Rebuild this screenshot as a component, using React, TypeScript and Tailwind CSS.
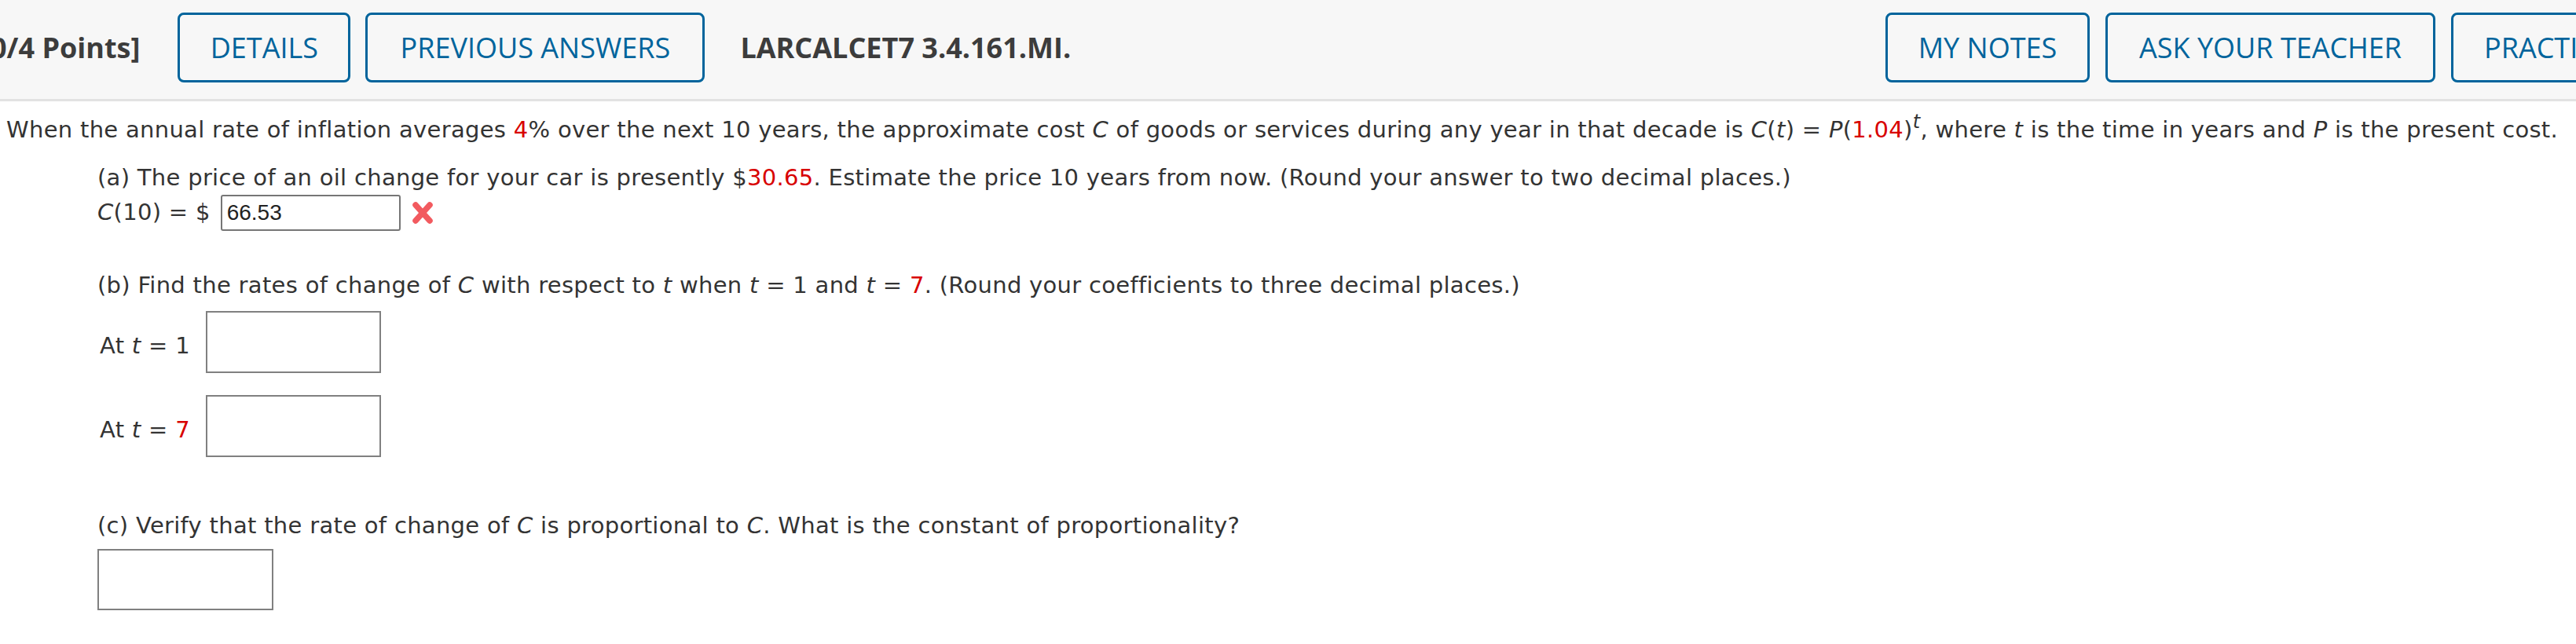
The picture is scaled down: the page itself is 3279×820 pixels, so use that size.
import React from "react";

function RedX() {
  return (
    <svg width="30" height="30" viewBox="0 0 30 30" className="ml-[13px] shrink-0">
      <path d="M6 5 L24 25 M24 5 L6 25" stroke="#f25a5f" strokeWidth="7.5" strokeLinecap="round" fill="none" />
    </svg>
  );
}

const Btn = ({ label, w }: { label: string; w: string }) => (
  <div
    className={`flex h-[89px] shrink-0 items-center justify-center whitespace-nowrap rounded-[8px] border-[3px] border-[#00649c] text-[36px] text-[#00649c] ${w}`}
  >
    {label}
  </div>
);

export default function App() {
  return (
    <div className="h-[820px] w-[3279px] overflow-hidden bg-white">
      <header className="flex h-[129px] items-start overflow-hidden border-b-[3px] border-[#e2e2e2] bg-[#f7f7f7] pt-[16px] font-['Open_Sans',sans-serif]">
        <div className="flex h-[89px] min-w-0 flex-1 items-center">
          <span className="-ml-[12px] shrink-0 whitespace-nowrap text-[36px] font-bold text-[#3c3c3c]">0/4 Points]</span>
          <div className="ml-[48px] flex gap-[19px]">
            <Btn label="DETAILS" w="w-[220px]" />
            <Btn label="PREVIOUS ANSWERS" w="w-[432px]" />
          </div>
          <span className="ml-[45px] shrink-0 whitespace-nowrap text-[36px] font-bold text-[#3c3c3c]">LARCALCET7 3.4.161.MI.</span>
        </div>
        <div className="flex w-[879px] shrink-0 gap-[20px] overflow-hidden">
          <Btn label="MY NOTES" w="w-[260px]" />
          <Btn label="ASK YOUR TEACHER" w="w-[420px]" />
          <Btn label="PRACTICE ANOTHER" w="px-[39px]" />
        </div>
      </header>

      <main className="pl-[8px] pt-[15px] font-['DejaVu_Sans',Verdana,sans-serif] text-[29px] leading-[1.5] tracking-[0.3px] text-[#333]">
        <p className="whitespace-nowrap">
          When the annual rate of inflation averages <span className="text-[#d80000]">4</span>% over the next 10 years, the approximate cost <i>C</i> of goods or services during any year in that decade is <i>C</i>(<i>t</i>) = <i>P</i>(<span className="text-[#d80000]">1.04</span>)<sup className="text-[24px] italic">t</sup>, where <i>t</i> is the time in years and <i>P</i> is the present cost.
        </p>
        <div className="pl-[116px]">
          <p className="mt-[17px] whitespace-nowrap">
            (a) The price of an oil change for your car is presently $<span className="text-[#d80000]">30.65</span>. Estimate the price 10 years from now. (Round your answer to two decimal places.)
          </p>
          <div className="flex h-[46px] items-center">
            <span className="whitespace-nowrap">
              <i>C</i>(10) = $
            </span>
            <div className="ml-[13px] flex h-[46px] w-[229px] items-center rounded-[3px] border-2 border-[#767676] pl-[6px] font-['Liberation_Sans',Arial,sans-serif] text-[28px] tracking-normal text-[#222]">
              66.53
            </div>
            <RedX />
          </div>

          <p className="mt-[48px] whitespace-nowrap">
            (b) Find the rates of change of <i>C</i> with respect to <i>t</i> when <i>t</i> = 1 and <i>t</i> = <span className="text-[#d80000]">7</span>. (Round your coefficients to three decimal places.)
          </p>
          <div className="mt-[10px] flex items-end gap-[20px] pl-[3px]">
            <span className="whitespace-nowrap pb-[12px]">
              At <i>t</i> = 1
            </span>
            <div className="h-[79px] w-[223px] border-2 border-[#808080] bg-white" />
          </div>
          <div className="mt-[28px] flex items-end gap-[20px] pl-[3px]">
            <span className="whitespace-nowrap pb-[12px]">
              At <i>t</i> = <span className="text-[#d80000]">7</span>
            </span>
            <div className="h-[79px] w-[223px] border-2 border-[#808080] bg-white" />
          </div>

          <p className="mt-[66px] whitespace-nowrap">
            (c) Verify that the rate of change of <i>C</i> is proportional to <i>C</i>. What is the constant of proportionality?
          </p>
          <div className="mt-[8px] h-[78px] w-[224px] border-2 border-[#808080] bg-white" />
        </div>
      </main>
    </div>
  );
}
